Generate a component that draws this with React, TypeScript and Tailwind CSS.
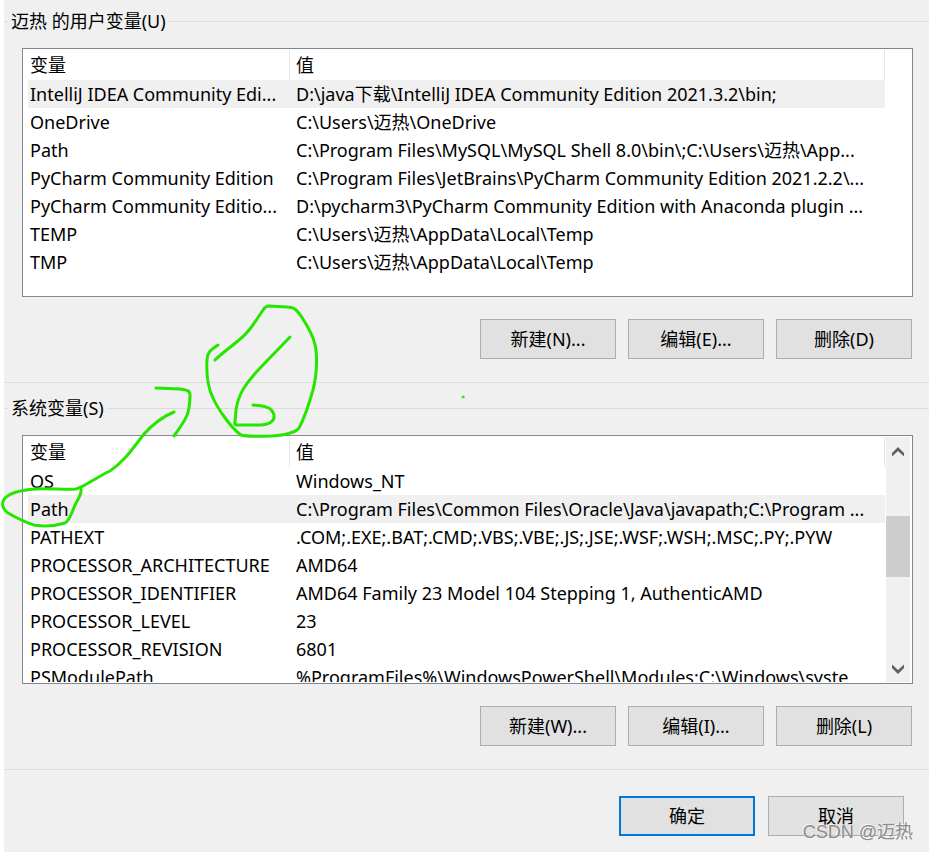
import type { ReactNode } from "react";

interface Variable {
    name: string;
    value: string;
    selected?: boolean;
}

const userVariables: Variable[] = [
    { name: "IntelliJ IDEA Community Edi...", value: "D:\\java下载\\IntelliJ IDEA Community Edition 2021.3.2\\bin;", selected: true },
    { name: "OneDrive", value: "C:\\Users\\迈热\\OneDrive" },
    { name: "Path", value: "C:\\Program Files\\MySQL\\MySQL Shell 8.0\\bin\\;C:\\Users\\迈热\\App..." },
    { name: "PyCharm Community Edition", value: "C:\\Program Files\\JetBrains\\PyCharm Community Edition 2021.2.2\\..." },
    { name: "PyCharm Community Editio...", value: "D:\\pycharm3\\PyCharm Community Edition with Anaconda plugin ..." },
    { name: "TEMP", value: "C:\\Users\\迈热\\AppData\\Local\\Temp" },
    { name: "TMP", value: "C:\\Users\\迈热\\AppData\\Local\\Temp" },
];

const systemVariables: Variable[] = [
    { name: "OS", value: "Windows_NT" },
    { name: "Path", value: "C:\\Program Files\\Common Files\\Oracle\\Java\\javapath;C:\\Program ...", selected: true },
    { name: "PATHEXT", value: ".COM;.EXE;.BAT;.CMD;.VBS;.VBE;.JS;.JSE;.WSF;.WSH;.MSC;.PY;.PYW" },
    { name: "PROCESSOR_ARCHITECTURE", value: "AMD64" },
    { name: "PROCESSOR_IDENTIFIER", value: "AMD64 Family 23 Model 104 Stepping 1, AuthenticAMD" },
    { name: "PROCESSOR_LEVEL", value: "23" },
    { name: "PROCESSOR_REVISION", value: "6801" },
    { name: "PSModulePath", value: "%ProgramFiles%\\WindowsPowerShell\\Modules;C:\\Windows\\syste" },
];

function VariableTable({ label, variables }: { label: string; variables: Variable[] }) {
    return (
        <table aria-label={label} className="w-full table-fixed border-separate border-spacing-0 text-left">
            <colgroup>
                <col className="w-[262px]" />
                <col />
            </colgroup>
            <thead>
                <tr className="h-[30px]">
                    <th className="border-r border-[#e5e5e5] p-0 pl-0.5 font-normal">变量</th>
                    <th className="border-r border-[#e5e5e5] p-0 pl-1.5 font-normal">值</th>
                </tr>
            </thead>
            <tbody>
                {variables.map((variable) => (
                    <tr key={variable.name} className={variable.selected ? "h-7 bg-[#f0f0f0]" : "h-7"}>
                        <td className="overflow-hidden p-0 pl-0.5 whitespace-nowrap">{variable.name}</td>
                        <td className="overflow-hidden p-0 pl-1.5 whitespace-nowrap">{variable.value}</td>
                    </tr>
                ))}
            </tbody>
        </table>
    );
}

function ScrollBar() {
    return (
        <div className="ml-px flex w-6 shrink-0 flex-col bg-[#f0f0f0]">
            <button type="button" aria-label="Scroll up" className="flex h-[30px] items-center justify-center">
                <svg width="12" height="10" viewBox="0 0 12 10" fill="#606060">
                    <path d="M6 0L12 6V9.500L6 4L0 9.500V6Z" />
                </svg>
            </button>
            <div className="flex-1 pt-[49px]">
                <div className="h-[61px] bg-[#cdcdcd]" />
            </div>
            <button type="button" aria-label="Scroll down" className="flex h-[26px] items-center justify-center">
                <svg width="12" height="10" viewBox="0 0 12 10" fill="#606060">
                    <path d="M6 10L12 4V0.500L6 6L0 0.500V4Z" />
                </svg>
            </button>
        </div>
    );
}

function DialogButton({ children, primary }: { children: ReactNode; primary?: boolean }) {
    return (
        <button
            type="button"
            className={`h-10 w-[136px] bg-[#e1e1e1] hover:bg-[#e5f1fb] ${
                primary ? "border-2 border-[#0078d7]" : "border border-[#adadad]"
            }`}
        >
            {children}
        </button>
    );
}

function VariableGroup({ title, children, buttons }: { title: string; children: ReactNode; buttons: string[] }) {
    return (
        <fieldset className="min-w-0 border-y border-[#dcdcdc] pb-[23px]">
            <legend className="ml-1 h-[26px] px-[3px] leading-[26px]">{title}</legend>
            <div className="mt-3.5 mr-4 ml-[18px] flex h-[249px] overflow-hidden border border-[#828790] bg-white py-px pr-0.5 pl-[5px]">
                {children}
            </div>
            <div className="mt-[22px] mr-[17px] flex justify-end gap-3">
                {buttons.map((button) => (
                    <DialogButton key={button}>{button}</DialogButton>
                ))}
            </div>
        </fieldset>
    );
}

// Pen marks drawn over the dialog
function PenMarks() {
    return (
        <svg
            className="pointer-events-none absolute top-0 left-0"
            width="480"
            height="540"
            viewBox="0 0 480 540"
            fill="none"
            stroke="#26e600"
            strokeWidth="3"
            strokeLinecap="round"
            strokeLinejoin="round"
        >
            <path d="M81 489C82 493 79 498 76 503C72 511 70 521 65 523C55 526 44 527 34 525C24 522 15 517 8 513C2 509 1 502 5 498C10 493 23 490 35 489C48 488 65 490 76 489C84 487 97 477 110 471C124 462 133 448 144 434C153 424 164 416 174 412" />
            <path d="M156 388L180 389C188 390 190 391 190 395C190 413 187 418 174 436" />
            <path d="M218 345C211 350 207 352 207 360C206 378 208 388 213 398C218 409 231 428 241 435C248 437 260 436 272 436C286 435 295 433 299 428C304 419 309 404 313 390C317 375 318 353 314 341C311 331 300 313 295 309C292 307 290 307 287 307L269 306C266 306 265 307 263 310C253 325 249 332 239 340C231 347 222 353 215 360" />
            <path d="M290 337L261 367C243 386 238 396 236 410L235 422C234 425 236 425 239 425L260 425C269 425 275 421 274 415C272 407 265 406 253 405" />
            <circle cx="463" cy="397" r="1" strokeWidth="1" fill="#26e600" />
        </svg>
    );
}

export default function App() {
    return (
        <div className="min-h-screen bg-white pl-1 font-['Noto_Sans','Noto_Sans_CJK_SC',sans-serif] text-[18px] leading-6 text-black">
            <main className="relative min-h-screen bg-[#f0f0f0] pt-2 pb-4">
                <div className="flex flex-col gap-3">
                    <VariableGroup title="迈热 的用户变量(U)" buttons={["新建(N)...", "编辑(E)...", "删除(D)"]}>
                        <div className="min-w-0 flex-1 pr-[25px]">
                            <VariableTable label="用户变量" variables={userVariables} />
                        </div>
                    </VariableGroup>
                    <VariableGroup title="系统变量(S)" buttons={["新建(W)...", "编辑(I)...", "删除(L)"]}>
                        <div className="min-w-0 flex-1 overflow-hidden">
                            <VariableTable label="系统变量" variables={systemVariables} />
                        </div>
                        <ScrollBar />
                    </VariableGroup>
                </div>
                <div className="mt-[26px] mr-[25px] flex justify-end gap-[13px]">
                    <DialogButton primary>确定</DialogButton>
                    <DialogButton>取消</DialogButton>
                </div>
                <span className="pointer-events-none absolute right-4 bottom-2 font-['Liberation_Sans','Noto_Sans_CJK_SC',sans-serif] text-[18px] text-[#8c8c8c] [text-shadow:-1px_-1px_0_#ffffffb0]">
                    CSDN @迈热
                </span>
            </main>
            <PenMarks />
        </div>
    );
}
